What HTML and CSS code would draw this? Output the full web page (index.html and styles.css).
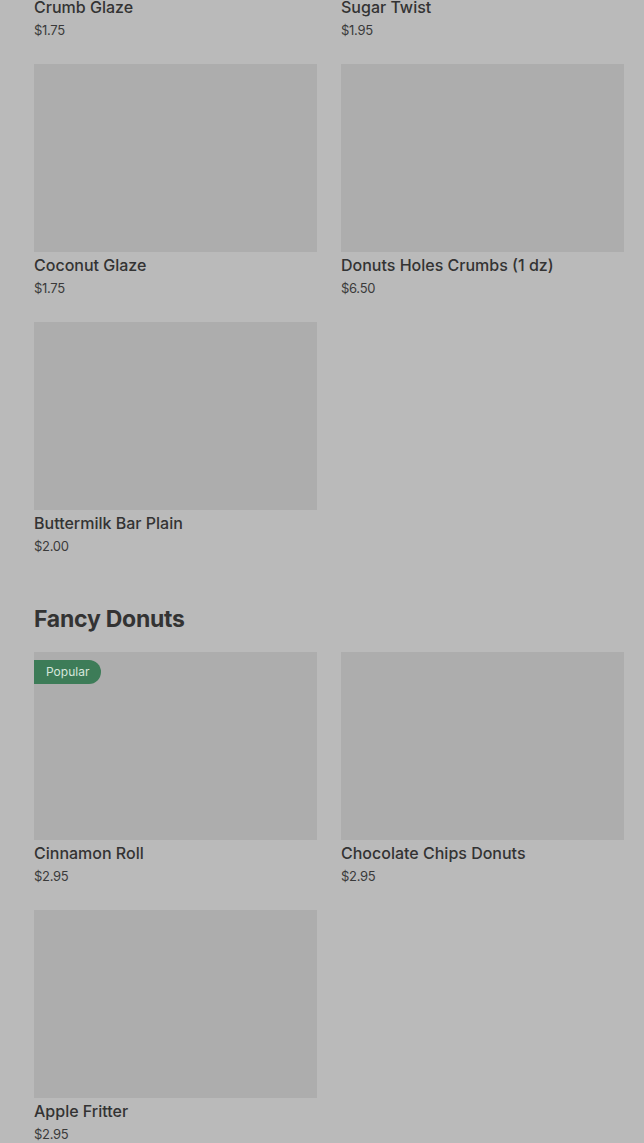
FILE: index.html
```html
<!DOCTYPE html>
<html>
<head>
<meta charset="utf-8">
<link rel="stylesheet" href="styles.css">
</head>
<body>
<div class="page">
  <div class="grid">
    <div class="card"><div class="img"></div><div class="name">Crumb Glaze</div><div class="price">$1.75</div></div>
    <div class="card"><div class="img"></div><div class="name">Sugar Twist</div><div class="price">$1.95</div></div>
    <div class="card"><div class="img"></div><div class="name">Coconut Glaze</div><div class="price">$1.75</div></div>
    <div class="card"><div class="img"></div><div class="name">Donuts Holes Crumbs (1 dz)</div><div class="price">$6.50</div></div>
    <div class="card"><div class="img"></div><div class="name">Buttermilk Bar Plain</div><div class="price">$2.00</div></div>
  </div>
  <h2 class="section-title">Fancy Donuts</h2>
  <div class="grid">
    <div class="card"><div class="img"><span class="badge">Popular</span></div><div class="name">Cinnamon Roll</div><div class="price">$2.95</div></div>
    <div class="card"><div class="img"></div><div class="name">Chocolate Chips Donuts</div><div class="price">$2.95</div></div>
    <div class="card"><div class="img"></div><div class="name">Apple Fritter</div><div class="price">$2.95</div></div>
  </div>
</div>
</body>
</html>
```
FILE: styles.css
```css
html, body {
  margin: 0;
  padding: 0;
  background: #bababa;
  font-family: Inter, "Noto Sans", sans-serif;
  color: #333333;
}
.page {
  margin-top: -194px;
  padding: 0 20px 0 34px;
}
.grid {
  display: grid;
  grid-template-columns: 283px 283px;
  column-gap: 24px;
  row-gap: 24px;
}
.card {
  display: flex;
  flex-direction: column;
}
.img {
  position: relative;
  height: 188px;
  background: #adadad;
  margin-bottom: 2px;
}
.name {
  font-size: 16px;
  line-height: 22px;
  font-weight: 500;
  color: #333333;
  letter-spacing: 0;
}
.price {
  font-size: 13px;
  line-height: 20px;
  color: #3a3a3a;
  margin-top: 2px;
  letter-spacing: -0.3px;
}
.section-title {
  margin: 49px 0 19px;
  font-size: 23px;
  line-height: 28px;
  font-weight: 700;
  color: #333333;
  letter-spacing: -0.25px;
}
.badge {
  position: absolute;
  left: 0;
  top: 8px;
  height: 24px;
  line-height: 24px;
  padding: 0 12px;
  background: #3d7c58;
  color: #d6e6dc;
  font-size: 12px;
  border-radius: 0 12px 12px 0;
}
```
